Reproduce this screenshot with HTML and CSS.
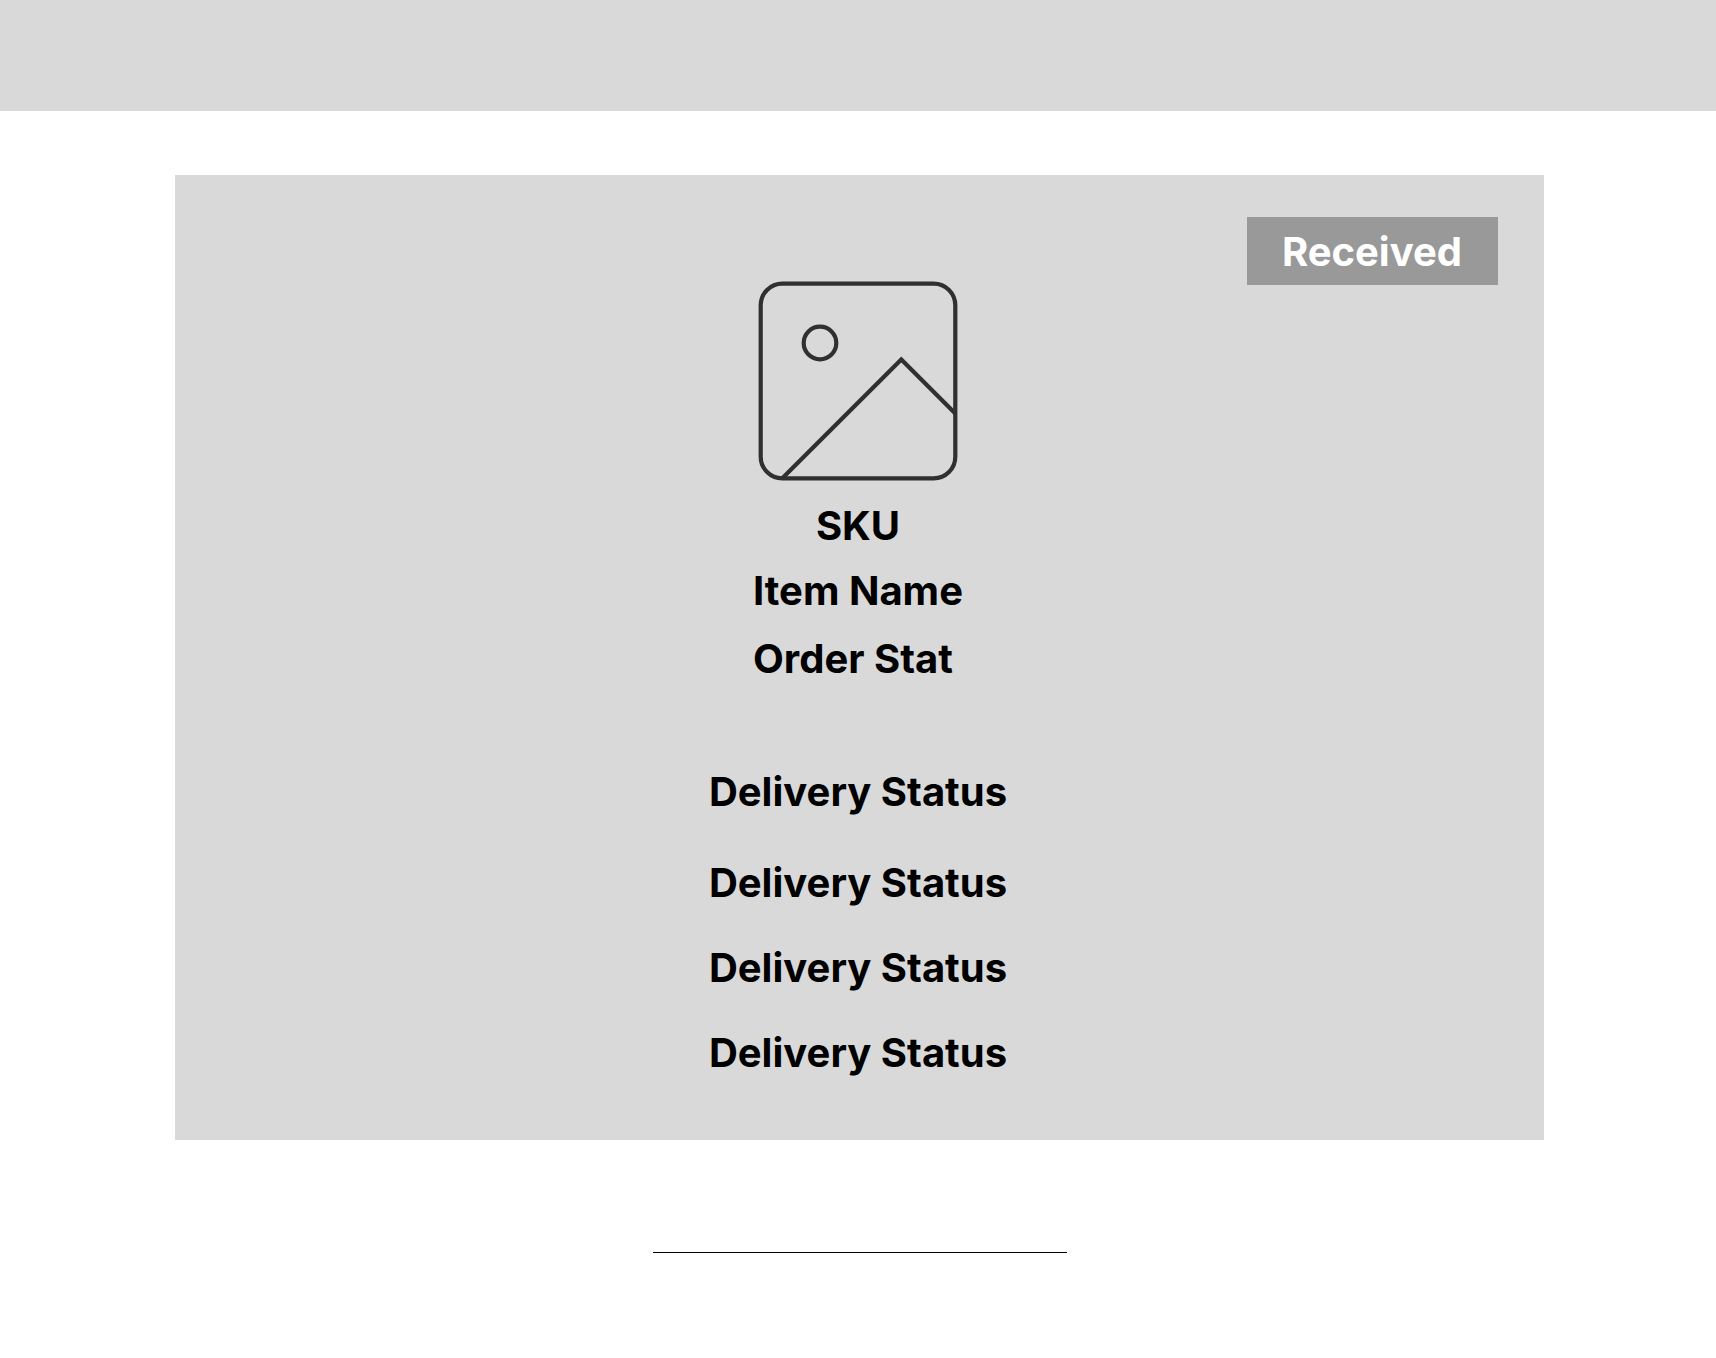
FILE: index.html
```html
<!DOCTYPE html>
<html lang="en">
<head>
<meta charset="utf-8">
<meta name="viewport" content="width=device-width, initial-scale=1">
<title>Order status</title>
<link rel="stylesheet" href="styles.css">
</head>
<body>
<header class="topbar"></header>
<main class="page">
  <article class="order-card">
    <button class="received" type="button">Received</button>
    <div class="order">
      <svg class="thumbnail" viewBox="0 0 200 200" fill="none" stroke="#303030" stroke-width="4.2" aria-hidden="true">
        <rect x="2.7" y="2.7" width="194.6" height="194.6" rx="21.6"/>
        <circle cx="62" cy="62" r="16.3"/>
        <path d="M24.3 197.3L143.3 78.4L197.3 132.4"/>
      </svg>
      <h1 class="sku">SKU</h1>
      <div class="summary">
        <p>Item Name</p>
        <p>Order Stat</p>
      </div>
      <p class="current">Delivery Status</p>
      <ul class="history">
        <li>Delivery Status</li>
        <li>Delivery Status</li>
        <li>Delivery Status</li>
      </ul>
    </div>
  </article>
  <hr class="divider">
</main>
</body>
</html>
```
FILE: styles.css
```css
* {
  box-sizing: border-box;
}

body {
  margin: 0;
  background: #fff;
  color: #000;
  font: 700 40px/48px Inter, "Liberation Sans", sans-serif;
}

h1,
p,
ul {
  margin: 0;
  padding: 0;
  font: inherit;
  list-style: none;
}

.topbar {
  height: 111px;
  background: #d9d9d9;
}

.page {
  padding: 64px 172px 104px 175px;
}

.order-card {
  display: grid;
  padding: 42px 46px 63px 43px;
  background: #d9d9d9;
}

.received,
.order {
  grid-area: 1 / 1;
}

.received {
  place-self: start end;
  z-index: 1;
  padding: 11px 36px 9px 35px;
  border: 0;
  background: #999;
  color: #fff;
  font: inherit;
  cursor: pointer;
}

.order {
  display: flex;
  flex-direction: column;
  align-items: center;
  padding-top: 64px;
}

.thumbnail {
  width: 200px;
  height: 200px;
  margin-bottom: 21px;
}

.summary {
  display: grid;
  gap: 20px;
  margin: 17px 0 85px;
}

.current {
  margin-bottom: 43px;
}

.history {
  display: grid;
  gap: 37px;
}

.divider {
  width: 414px;
  max-width: 100%;
  height: 1px;
  margin: 112px auto 0;
  border: 0;
  background: #000;
}
```
